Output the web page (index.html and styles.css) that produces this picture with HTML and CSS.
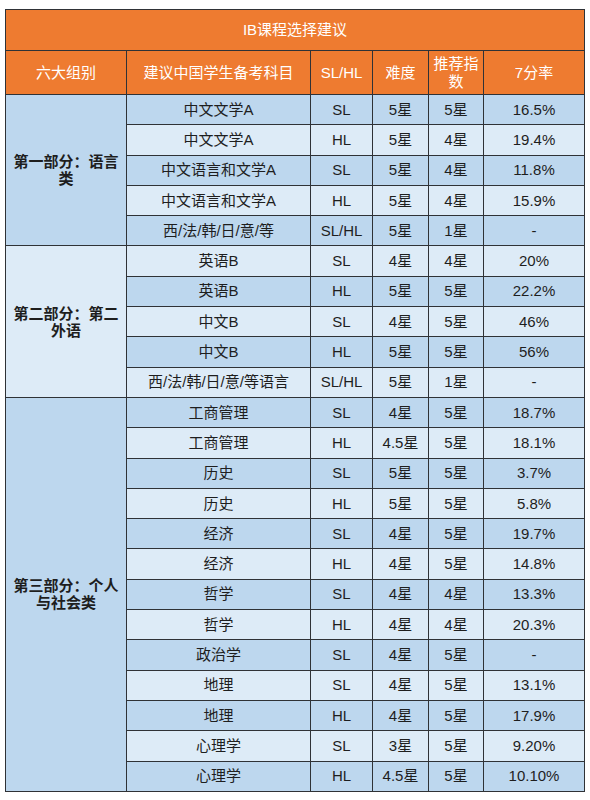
FILE: index.html
```html
<!DOCTYPE html>
<html lang="zh">
<head>
<meta charset="utf-8">
<link rel="stylesheet" href="styles.css">
</head>
<body>
<div class="page">
<table class="ib">
  <colgroup>
    <col class="c-group"><col class="c-subject"><col class="c-level"><col class="c-diff"><col class="c-rec"><col class="c-rate">
  </colgroup>
  <thead>
    <tr class="title-row"><th colspan="6">IB课程选择建议</th></tr>
    <tr class="head-row">
      <th>六大组别</th><th>建议中国学生备考科目</th><th>SL/HL</th><th>难度</th><th class="wrap">推荐指数</th><th>7分率</th>
    </tr>
  </thead>
  <tbody>
    <tr class="dk"><td class="group dk" rowspan="5">第一部分：语言类</td><td>中文文学A</td><td>SL</td><td>5星</td><td>5星</td><td>16.5%</td></tr>
    <tr class="lt"><td>中文文学A</td><td>HL</td><td>5星</td><td>4星</td><td>19.4%</td></tr>
    <tr class="dk"><td>中文语言和文学A</td><td>SL</td><td>5星</td><td>4星</td><td>11.8%</td></tr>
    <tr class="lt"><td>中文语言和文学A</td><td>HL</td><td>5星</td><td>4星</td><td>15.9%</td></tr>
    <tr class="dk"><td>西/法/韩/日/意/等</td><td>SL/HL</td><td>5星</td><td>1星</td><td>-</td></tr>

    <tr class="lt"><td class="group lt" rowspan="5">第二部分：第二外语</td><td>英语B</td><td>SL</td><td>4星</td><td>4星</td><td>20%</td></tr>
    <tr class="dk"><td>英语B</td><td>HL</td><td>5星</td><td>5星</td><td>22.2%</td></tr>
    <tr class="lt"><td>中文B</td><td>SL</td><td>4星</td><td>5星</td><td>46%</td></tr>
    <tr class="dk"><td>中文B</td><td>HL</td><td>5星</td><td>5星</td><td>56%</td></tr>
    <tr class="lt"><td>西/法/韩/日/意/等语言</td><td>SL/HL</td><td>5星</td><td>1星</td><td>-</td></tr>

    <tr class="dk"><td class="group dk" rowspan="13">第三部分：个人与社会类</td><td>工商管理</td><td>SL</td><td>4星</td><td>5星</td><td>18.7%</td></tr>
    <tr class="lt"><td>工商管理</td><td>HL</td><td>4.5星</td><td>5星</td><td>18.1%</td></tr>
    <tr class="dk"><td>历史</td><td>SL</td><td>5星</td><td>5星</td><td>3.7%</td></tr>
    <tr class="lt"><td>历史</td><td>HL</td><td>5星</td><td>5星</td><td>5.8%</td></tr>
    <tr class="dk"><td>经济</td><td>SL</td><td>4星</td><td>5星</td><td>19.7%</td></tr>
    <tr class="lt"><td>经济</td><td>HL</td><td>4星</td><td>5星</td><td>14.8%</td></tr>
    <tr class="dk"><td>哲学</td><td>SL</td><td>4星</td><td>4星</td><td>13.3%</td></tr>
    <tr class="lt"><td>哲学</td><td>HL</td><td>4星</td><td>4星</td><td>20.3%</td></tr>
    <tr class="dk"><td>政治学</td><td>SL</td><td>4星</td><td>5星</td><td>-</td></tr>
    <tr class="lt"><td>地理</td><td>SL</td><td>4星</td><td>5星</td><td>13.1%</td></tr>
    <tr class="dk"><td>地理</td><td>HL</td><td>4星</td><td>5星</td><td>17.9%</td></tr>
    <tr class="lt"><td>心理学</td><td>SL</td><td>3星</td><td>5星</td><td>9.20%</td></tr>
    <tr class="dk"><td>心理学</td><td>HL</td><td>4.5星</td><td>5星</td><td>10.10%</td></tr>
  </tbody>
</table>
</div>
</body>
</html>
```
FILE: styles.css
```css
html, body {
  margin: 0;
  padding: 0;
  background: #ffffff;
}
.page {
  padding: 9px 0 0 5px;
}
.ib {
  border-collapse: collapse;
  table-layout: fixed;
  width: 579px;
  font-family: "Liberation Sans", "Noto Sans CJK SC", sans-serif;
  font-size: 15px;
  color: #1e1e1e;
}
.c-group { width: 121px; }
.c-subject { width: 184px; }
.c-level { width: 62px; }
.c-diff { width: 56px; }
.c-rec { width: 55px; }
.c-rate { width: 101px; }

.ib th, .ib td {
  border: 1px solid #2f3236;
  text-align: center;
  vertical-align: middle;
  padding: 0 4px;
  white-space: nowrap;
}
.ib th {
  background: #ee7b30;
  color: #ffffff;
  font-weight: 400;
  line-height: 18px;
}
.title-row th {
  height: 40px;
}
.head-row th {
  height: 43px;
}
.ib th.wrap {
  white-space: normal;
  padding: 0 2px;
}
.ib td {
  height: 29.3px;
  line-height: 18px;
}
.ib td.group {
  white-space: normal;
  font-weight: 700;
  padding: 0 6px;
  line-height: 17px;
}
tr.dk td, td.group.dk { background: #bdd7ee; }
tr.lt td, td.group.lt { background: #ddebf7; }
```
